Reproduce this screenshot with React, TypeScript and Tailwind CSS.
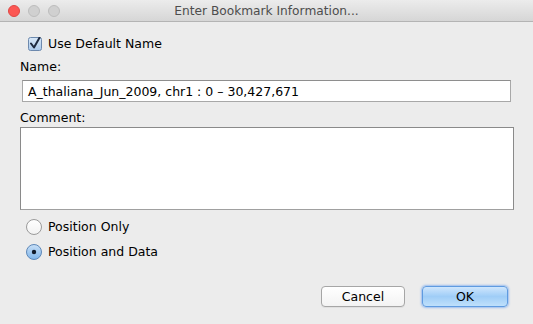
import React from "react";

export default function App() {
  return (
    <div className="w-[533px] h-[324px] bg-[#ececec] overflow-hidden text-[12.5px] text-black" style={{ fontFamily: '"DejaVu Sans", "Liberation Sans", sans-serif' }}>
      {/* title bar */}
      <div className="relative h-[22px] border-b border-[#b4b4b4] bg-gradient-to-b from-[#ececec] to-[#d6d6d6] flex items-center">
        <div className="flex items-center gap-[8px] pl-[8px]">
          <span className="block w-[12px] h-[12px] rounded-full bg-[#fc5753] border border-[#df4744]" />
          <span className="block w-[12px] h-[12px] rounded-full bg-[#d0d0d0] border border-[#bdbdbd]" />
          <span className="block w-[12px] h-[12px] rounded-full bg-[#d0d0d0] border border-[#bdbdbd]" />
        </div>
        <div className="absolute inset-0 flex items-center justify-center text-[#4d4d4d] text-[12.2px] pt-[1px]">
          Enter Bookmark Information...
        </div>
      </div>

      <div className="pl-[20px] pr-[19px]">
        {/* checkbox */}
        <div className="flex items-center h-[14px] mt-[15px] pl-[8px] gap-[6px]">
          <svg width="14" height="14" viewBox="0 0 14 14">
            <defs>
              <linearGradient id="cb" x1="0" y1="0" x2="0" y2="1">
                <stop offset="0" stopColor="#d8e8f8" />
                <stop offset="1" stopColor="#a9c9ec" />
              </linearGradient>
            </defs>
            <rect x="0.5" y="0.5" width="13" height="13" rx="2" fill="url(#cb)" stroke="#6d89ad" />
            <path d="M3 6.5 L6 10.5 L11.5 0.8" fill="none" stroke="#1d2a40" strokeWidth="2" strokeLinecap="round" strokeLinejoin="round" />
          </svg>
          <span className="leading-[14px]">Use Default Name</span>
        </div>

        {/* Name */}
        <div className="mt-[8px] leading-[15px]">Name:</div>
        <div className="mt-[6px] ml-[2px] mr-[3px] h-[22px] bg-white border border-[#a8a8a8] border-t-[#8e8e8e] flex items-center pl-[5px]">
          <span className="leading-[15px]">A_thaliana_Jun_2009, chr1 : 0 – 30,427,671</span>
        </div>

        {/* Comment */}
        <div className="mt-[8px] leading-[15px]">Comment:</div>
        <div className="mt-[2px] h-[83px] bg-white border border-[#8a8a8a] border-b-[#a0a0a0]" />

        {/* radios */}
        <div className="mt-[9px] pl-[6px] flex items-center gap-[6px] h-[16px]">
          <svg width="16" height="16" viewBox="0 0 16 16">
            <defs>
              <linearGradient id="r1" x1="0" y1="0" x2="0" y2="1">
                <stop offset="0" stopColor="#ffffff" />
                <stop offset="1" stopColor="#f2f2f2" />
              </linearGradient>
            </defs>
            <circle cx="8" cy="8" r="7.5" fill="url(#r1)" stroke="#9a9a9a" />
          </svg>
          <span className="leading-[16px]">Position Only</span>
        </div>
        <div className="mt-[9px] pl-[6px] flex items-center gap-[6px] h-[16px]">
          <svg width="16" height="16" viewBox="0 0 16 16">
            <defs>
              <linearGradient id="r2" x1="0" y1="0" x2="0" y2="1">
                <stop offset="0" stopColor="#c9e0f7" />
                <stop offset="1" stopColor="#7fb5ea" />
              </linearGradient>
            </defs>
            <circle cx="8" cy="8" r="7.5" fill="url(#r2)" stroke="#5e88b8" />
            <circle cx="8" cy="8" r="2.2" fill="#101a2a" />
          </svg>
          <span className="leading-[16px]">Position and Data</span>
        </div>

        {/* buttons */}
        <div className="mt-[26px] flex justify-end gap-[17px] pr-[6px]">
          <button className="w-[84px] h-[21px] rounded-[4px] bg-gradient-to-b from-white to-[#f3f3f3] border border-[#a6a6a6] shadow-[0_1px_0_rgba(0,0,0,0.05)] text-[12.5px] leading-[19px]">
            Cancel
          </button>
          <button className="w-[86px] h-[21px] rounded-[4px] bg-gradient-to-b from-[#cfe6fc] via-[#9fcdf7] to-[#bfe0fb] border border-[#5f9be0] shadow-[0_0_2px_1px_rgba(120,170,240,0.7)] text-[12.5px] leading-[19px]">
            OK
          </button>
        </div>
      </div>
    </div>
  );
}
